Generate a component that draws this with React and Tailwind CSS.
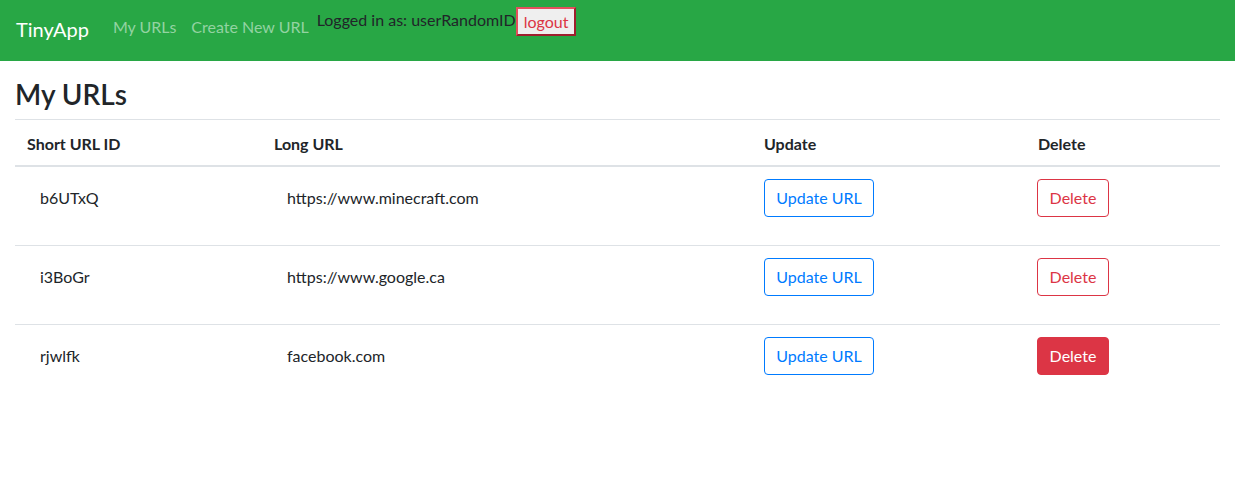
import React from "react";

const rows = [
  { id: "b6UTxQ", url: "https://www.minecraft.com", filled: false },
  { id: "i3BoGr", url: "https://www.google.ca", filled: false },
  { id: "rjwlfk", url: "facebook.com", filled: true },
];

export default function App() {
  return (
    <div className="min-h-[501px] bg-white text-[#212529] text-base" style={{ fontFamily: "Lato, 'Noto Sans', sans-serif" }}>
      <nav className="h-[61px] bg-[#28a745] flex items-start px-4">
        <a className="mt-[14px] mr-4 text-[20px] leading-[30px] text-white whitespace-nowrap">TinyApp</a>
        <ul className="flex items-start">
          <li className="mt-[15px] px-2 leading-6 text-[#93d3a2] whitespace-nowrap">My URLs</li>
          <li className="mt-[15px] pl-[7px] pr-2 leading-6 text-[#93d3a2] whitespace-nowrap">Create New URL</li>
        </ul>
        <div className="flex items-start">
          <span className="mt-[8px] leading-6 text-[#212529] whitespace-nowrap">Logged in as: userRandomID</span>
          <button className="mt-[7px] h-[29px] px-[6px] bg-[#efefef] text-[#dc3545] leading-6 border-2 border-t-[#e4505e] border-l-[#e4505e] border-b-[#9e1f2d] border-r-[#9e1f2d]">
            logout
          </button>
        </div>
      </nav>
      <main className="px-[15px]">
        <h1 className="pt-4 mb-2 text-[28px] leading-[34px] font-semibold">My URLs</h1>
        <table className="w-[1205px] table-fixed border-collapse">
          <colgroup>
            <col className="w-[247px]" />
            <col className="w-[490px]" />
            <col className="w-[274px]" />
            <col className="w-[194px]" />
          </colgroup>
          <thead>
            <tr className="border-t border-[#dee2e6]">
              {["Short URL ID", "Long URL", "Update", "Delete"].map((h) => (
                <th key={h} className="text-left font-bold px-3 pt-3 pb-[9px] leading-6 border-b-2 border-[#dee2e6]">
                  {h}
                </th>
              ))}
            </tr>
          </thead>
          <tbody>
            {rows.map((r) => (
              <tr key={r.id} className="border-t border-[#dee2e6]">
                <td className="align-top px-3 pt-3 pb-3">
                  <span className="inline-block border border-transparent px-3 py-1.5 leading-6">{r.id}</span>
                </td>
                <td className="align-top px-3 pt-3 pb-3">
                  <span className="inline-block border border-transparent px-3 py-1.5 leading-6">{r.url}</span>
                </td>
                <td className="align-top px-3 pt-3 pb-3">
                  <button className="mb-4 h-[38px] w-[110px] rounded border border-[#007bff] text-[#007bff] leading-6">
                    Update URL
                  </button>
                </td>
                <td className="align-top px-3 pt-3 pb-3">
                  <button
                    className={
                      r.filled
                        ? "mb-4 -ml-px h-[38px] w-[72px] rounded border border-[#dc3545] bg-[#dc3545] text-white leading-6"
                        : "mb-4 -ml-px h-[38px] w-[72px] rounded border border-[#dc3545] text-[#dc3545] leading-6"
                    }
                  >
                    Delete
                  </button>
                </td>
              </tr>
            ))}
          </tbody>
        </table>
      </main>
    </div>
  );
}
